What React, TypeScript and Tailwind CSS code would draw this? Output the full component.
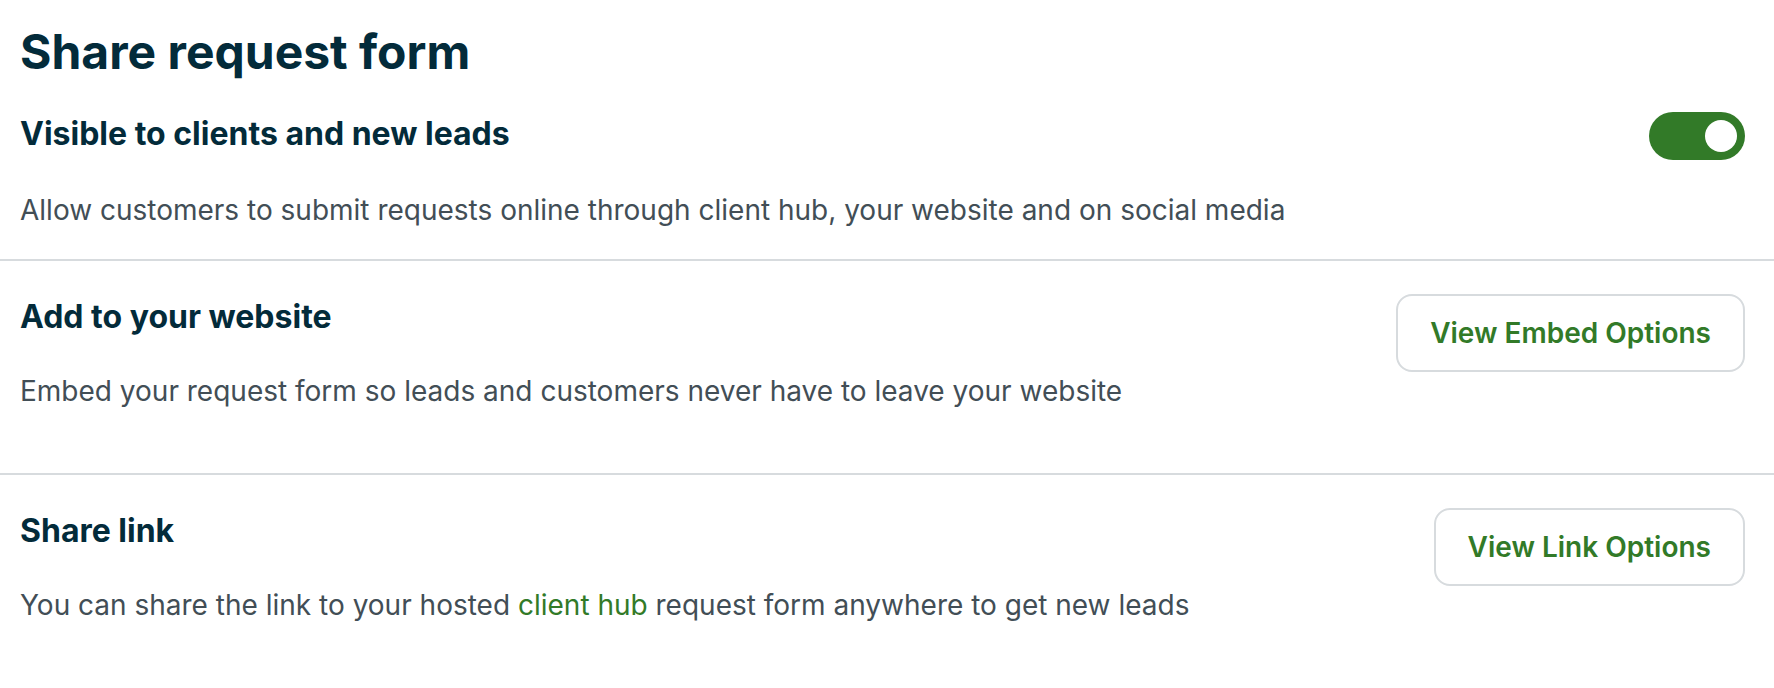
import React from "react";

const font = { fontFamily: "Inter, 'Noto Sans', sans-serif" };

function Toggle() {
  return (
    <div className="mt-[2px] flex h-[48px] w-[96px] shrink-0 items-center justify-end rounded-full bg-[#327a28] pr-[8px]">
      <div className="h-[32px] w-[32px] rounded-full bg-white" />
    </div>
  );
}

function OutlineButton({ label }: { label: string }) {
  return (
    <button className="flex h-[78px] shrink-0 items-center justify-center rounded-[16px] border-2 border-[#d7dbde] bg-white px-[32px] text-[28px] font-semibold text-[#327a28]">
      {label}
    </button>
  );
}

export default function App() {
  return (
    <div className="h-[688px] w-[1774px] bg-white text-[#032b3a]" style={font}>
      <div className="pl-[20px] pr-[29px] pt-[20px]">
        <h1 className="text-[48px] font-bold leading-[64px]">Share request form</h1>
        <div className="mt-[26px] flex items-start justify-between">
          <h2 className="mt-[4px] text-[32px] font-bold leading-[40px]">Visible to clients and new leads</h2>
          <Toggle />
        </div>
        <p className="mt-[32px] text-[28px] leading-[36px] text-[#424e56]">
          Allow customers to submit requests online through client hub, your website and on social media
        </p>
      </div>
      <div className="mt-[31px] h-[2px] w-full bg-[#d7dbde]" />
      <div className="flex h-[212px] items-start justify-between pl-[20px] pr-[29px] pt-[33px]">
        <div className="pt-[3px]">
          <h2 className="text-[32px] font-bold leading-[40px]">Add to your website</h2>
          <p className="mt-[36px] text-[28px] leading-[36px] text-[#424e56]">
            Embed your request form so leads and customers never have to leave your website
          </p>
        </div>
        <OutlineButton label="View Embed Options" />
      </div>
      <div className="h-[2px] w-full bg-[#d7dbde]" />
      <div className="flex items-start justify-between pl-[20px] pr-[29px] pt-[33px]">
        <div className="pt-[3px]">
          <h2 className="text-[32px] font-bold leading-[40px]">Share link</h2>
          <p className="mt-[36px] text-[28px] leading-[36px] text-[#424e56]">
            You can share the link to your hosted <span className="text-[#327a28]">client hub</span> request form anywhere to get new leads
          </p>
        </div>
        <OutlineButton label="View Link Options" />
      </div>
    </div>
  );
}
